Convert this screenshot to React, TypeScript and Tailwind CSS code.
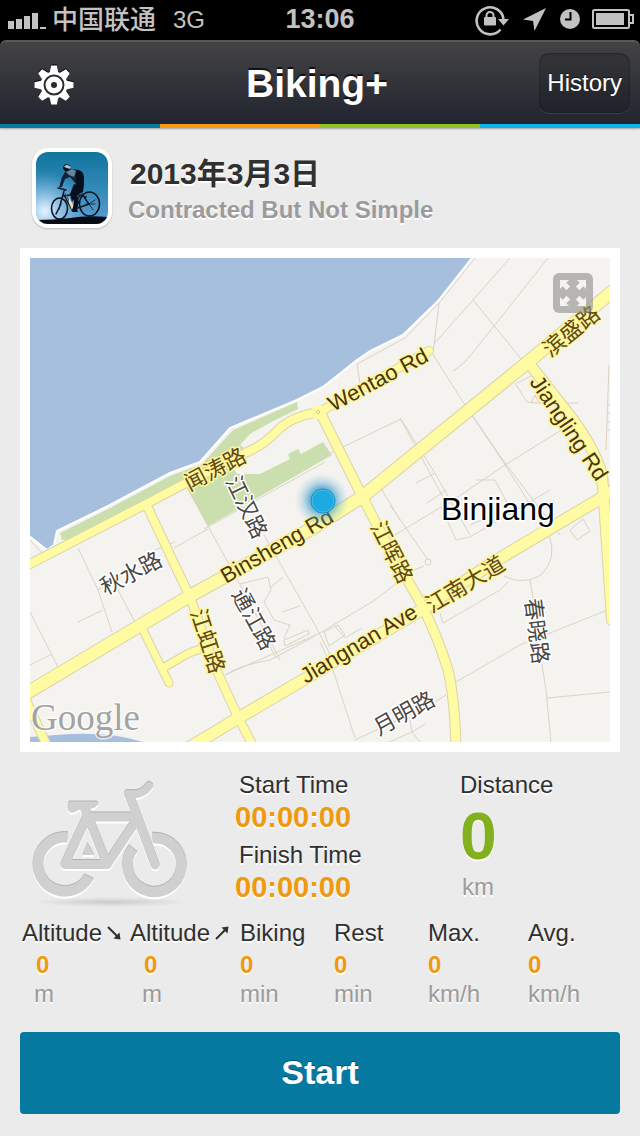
import React from "react";

const ROADS: { d: string; w: number }[] = [
  { d: "M143 630L169 683", w: 8 },
  { d: "M163 668L187 654Q200 648 209 648", w: 8 },
  { d: "M26 700L48 748", w: 9 },
  { d: "M146 504L190 597L215 667L238 717L254 748", w: 9 },
  { d: "M320 412L360 492L383 537L420 602Q437 634 448 670Q455 700 456 750", w: 10 },
  { d: "M528 362L567 412Q594 446 602 475L604 500L612 620", w: 11 },
  { d: "M24 567L146 504L180 486L247 452Q262 446 275 433Q290 416 320 412L330 406L429 351", w: 9 },
  { d: "M20 697L188 597L313 528L362 497L528 362L620 285", w: 13 },
  { d: "M180 753L240 717L303 680L423 609L497 560L603 497L620 486", w: 12 },
];

const LANES = [
  "M475 258L439 303L405 338L357 364L361 390",
  "M439 303L434 346L432 353L465 405L504 463L550 536",
  "M434 344L473 300L510 258M473 300L522 360M453 371L465 362L494 326L548 258",
  "M472 415L505 463L560 535M563 429L505 465L446 505M320 458L401 419L436 475L470 535",
  "M400 418L450 510M416 483L435 473M427 503L446 490",
  "M609 365L606 450M607 405H611M607 413H611M607 422H611M607 430H611",
  "M515 383L527 402L537 403L578 403M517 383L535 374M531 403L535 395L539 403",
  "M390 505L428 560M382 490L400 520M424 566L412 571L375 600L320 633L225 675",
  "M395 535L441 507L456 540L470 537L550 490M470 525L500 512M476 480L495 480L511 510",
  "M549 535Q558 558 541 575Q530 582 515 580L504 576M530 580L537 620L542 665L546 690L551 742",
  "M547 698L610 692M456 682L520 645L610 609M355 740L430 705L446 695M355 738L333 670L320 642",
  "M440 613L443 623L500 590L508 582M324 632L338 625L345 635L329 646ZM335 626L345 638L362 628",
  "M570 530L583 519L590 531L577 540Z",
  "M187 487L208 526L250 603L280 660M204 529L325 462M174 548L208 529",
  "M264 535L315 625L334 662M225 675Q240 665 270 660L315 636M276 658L265 637",
  "M78 548L98 590L112 632M98 590L128 570M103 610L78 622M118 590L135 622",
  "M30 612L58 667M30 665L52 654M30 540L42 553M155 550L175 542",
  "M240 584L268 577L271 590L264 602L274 620L290 625L284 638M270 588L283 577M282 612L300 606M284 640L308 630L309 634L285 646Z",
  "M385 744L412 732L420 742M410 720L412 732L425 724",
];

const CJK_LABELS: { t: string; x: number; y: number; a: number; road: boolean }[] = [
  { t: "闻涛路", x: 215, y: 469, a: -28, road: true },
  { t: "滨盛路", x: 571, y: 331, a: -39, road: true },
  { t: "江汉路", x: 247, y: 507, a: 64, road: false },
  { t: "江晖路", x: 392, y: 552, a: 63, road: true },
  { t: "江虹路", x: 208, y: 641, a: 72, road: true },
  { t: "通江路", x: 254, y: 619, a: 61, road: false },
  { t: "春晓路", x: 537, y: 631, a: 83, road: false },
  { t: "秋水路", x: 131, y: 573, a: -28, road: false },
  { t: "江南大道", x: 465, y: 584, a: -31, road: true },
  { t: "月明路", x: 404, y: 713, a: -29, road: false },
];

const LATIN_LABELS = [
  { t: "Wentao Rd", x: 333, y: 412, a: -28 },
  { t: "Binsheng Rd", x: 226, y: 584, a: -30 },
  { t: "Jiangnan Ave", x: 306, y: 684, a: -31 },
  { t: "Jiangling Rd", x: 529, y: 382, a: 56 },
];

const SANS = "'Liberation Sans', 'Noto Sans CJK SC', sans-serif";
const CJK = "'Noto Sans CJK SC', sans-serif";

function CityMap() {
  return (
    <svg viewBox="30 258 580 484" className="block w-full" role="img" aria-label="Map of Binjiang">
      <defs>
        <radialGradient id="glow">
          <stop offset="0.4" stopColor="#2b93c4" stopOpacity="0.75" />
          <stop offset="0.7" stopColor="#4fa6d0" stopOpacity="0.3" />
          <stop offset="1" stopColor="#7fc0e0" stopOpacity="0" />
        </radialGradient>
      </defs>
      <rect x="30" y="258" width="580" height="484" fill="#f4f3f0" />
      <path
        d="M20 250H480L472 258L438 301L403 335L370 351L357 360L323 387L297 400L230 428L200 462L170 473L110 505L57 531L54 545L47 550L20 529Z"
        fill="#a5bfdd"
        stroke="#fff"
        strokeWidth="2"
      />
      <path d="M30 737L70 734Q115 732 146 743H30Z" fill="#a5bfdd" />
      <g fill="#cbdfae">
        <path d="M60 533L62 540L80 538L147 503L247 450L240 445L250 434L273 421L298 409L297 402L233 430L202 464L170 476L110 508Z" />
        <path d="M186 487L230 462L237 474H260L290 459L288 454L298 449L301 454L323 442L332 455L208 526Z" />
      </g>
      <g fill="none" stroke="#dbd2c4" strokeWidth="1">
        {LANES.map((d) => (
          <path key={d} d={d} />
        ))}
        <circle cx="428" cy="562" r="3" fill="#f4f3f0" />
      </g>
      <g fill="none" strokeLinecap="round" strokeLinejoin="round">
        {ROADS.map((r) => (
          <path key={r.d} d={r.d} stroke="#dcd3a6" strokeWidth={r.w + 1} />
        ))}
        {ROADS.map((r) => (
          <path key={r.d} d={r.d} stroke="#fffba3" strokeWidth={r.w - 1} />
        ))}
      </g>
      <circle cx="318" cy="412" r="7" fill="#fffba3" />
      <path d="M318 410L320 412L318 414L316 412Z" fill="none" stroke="#cfc48c" />
      <g strokeWidth="3" strokeLinejoin="round" fontSize="22" className="[paint-order:stroke]">
        {LATIN_LABELS.map((l) => (
          <text
            key={l.t}
            x={l.x}
            y={l.y}
            transform={`rotate(${l.a} ${l.x} ${l.y})`}
            fontFamily={SANS}
            fill="#4a3310"
            stroke="#fff796"
          >
            {l.t}
          </text>
        ))}
        {CJK_LABELS.map((l) => (
          <text
            key={l.t}
            x={l.x}
            y={l.y + 8}
            transform={`rotate(${l.a} ${l.x} ${l.y})`}
            textAnchor="middle"
            fontFamily={CJK}
            fill={l.road ? "#5e481a" : "#4c4643"}
            stroke={l.road ? "#fff796" : "#fff"}
          >
            {l.t}
          </text>
        ))}
      </g>
      <circle cx="322" cy="500" r="27" fill="url(#glow)" />
      <circle cx="323" cy="501" r="12" fill="#1fa9e1" stroke="#1a8fc4" />
      <circle cx="323" cy="501" r="11" fill="none" stroke="#4dbbe8" />
      <text x="441" y="520" fontSize="32" fontFamily={SANS} fill="#000" stroke="#fff" strokeWidth="3" className="[paint-order:stroke]">
        Binjiang
      </text>
      <text
        x="31"
        y="730"
        fontSize="37"
        fontFamily="'Liberation Serif', serif"
        fill="#a3a3a3"
        stroke="#fff"
        strokeOpacity="0.7"
        strokeWidth="3"
        className="[paint-order:stroke]"
      >
        Google
      </text>
    </svg>
  );
}

function StatusIcons() {
  return (
    <svg viewBox="474 3 162 34" className="h-[34px] w-[162px]" fill="#c2c2c2" aria-hidden="true">
      <path d="M500.500 29.500A13.500 13.500 0 1 1 503.500 19" fill="none" stroke="#c2c2c2" strokeWidth="2.600" />
      <path d="M498 19H509L503.500 25.500Z" />
      <rect x="484" y="17" width="12" height="8.500" rx="1" />
      <path d="M486.500 18V15.500a3.500 3.500 0 0 1 7 0V18" fill="none" stroke="#c2c2c2" strokeWidth="2" />
      <path d="M546 8L534.500 31L533 21L523 19.500Z" />
      <circle cx="570" cy="19" r="10" />
      <path d="M570.500 12V19.500H565" fill="none" stroke="#000" strokeWidth="2" />
      <rect x="593" y="10" width="36" height="18" rx="1.500" fill="none" stroke="#c2c2c2" strokeWidth="2" />
      <rect x="596" y="13" width="28" height="12" />
      <path d="M630 15H633V23H630" fill="none" stroke="#c2c2c2" strokeWidth="2" />
    </svg>
  );
}

function Gear() {
  return (
    <svg viewBox="-20 -20 40 40" className="h-10 w-10 drop-shadow-[0_-1px_0_#000]" fill="#fff" aria-hidden="true">
      {[0, 45, 90, 135, 180, 225, 270, 315].map((a) => (
        <path key={a} d="M-4.500 -12L-2.800 -19.500H2.800L4.500 -12Z" transform={`rotate(${a})`} />
      ))}
      <circle r="13.500" />
      <circle r="9.500" fill="none" stroke="#2b2c30" strokeWidth="2" />
      <circle r="3" fill="#2b2c30" />
    </svg>
  );
}

function RiderPicture() {
  return (
    <svg viewBox="0 0 72 72" className="h-[72px] w-[72px] rounded-[12px]" role="img" aria-label="Biking+">
      <defs>
        <linearGradient id="sky" x1="0" y1="0" x2="0" y2="1">
          <stop offset="0" stopColor="#10759c" />
          <stop offset="0.5" stopColor="#3289b8" />
          <stop offset="1" stopColor="#5c9fd4" />
        </linearGradient>
        <radialGradient id="sun" cx="0.12" cy="0.82" r="0.55">
          <stop offset="0" stopColor="#e6f4ff" />
          <stop offset="1" stopColor="#8cc4ee" stopOpacity="0" />
        </radialGradient>
      </defs>
      <rect width="72" height="72" fill="url(#sky)" />
      <rect width="72" height="72" fill="url(#sun)" />
      <path d="M0 68Q18 68 34 66Q50 63 72 65V72H0Z" fill="#060b14" />
      <g fill="none" stroke="#0b101b" strokeWidth="1.500">
        <ellipse cx="23.500" cy="56.500" rx="8" ry="10.500" />
        <ellipse cx="53.500" cy="52" rx="10" ry="12" />
      </g>
      <g fill="none" stroke="#111827" strokeLinecap="round" strokeWidth="1.500">
        <path d="M23 57L28 39M28 44L39 42L50 45M28 43L36 58L44 43M36 58L53 52L46 42M22 36L30 38M25 52L20 62" />
        <path d="M53 52L49 47M53 52L59 48M53 52L57 58M50 52H59" strokeWidth="0.800" />
      </g>
      <path d="M29 41L37 56" stroke="#8d3c35" strokeWidth="1" />
      <path d="M33 46L38 54L36 58L33 51Z" fill="#eadfb3" />
      <path d="M27 17Q27 12 31 12Q35 13 35 16L34 20H30Z" fill="#0c1422" />
      <path d="M28 15Q30 11 35 15L34 17Z" fill="#a9c8df" />
      <path d="M29 20L36 17L43 18L43 28L40 32L34 25L29 27L26 35L23 36L26 25Z" fill="#142138" />
      <path d="M30 20L36 17L40 19L38 25L33 23Z" fill="#6783a1" />
      <path d="M40 18Q47 17 48 25L48 33L47 40L41 43L43 50L41 57L42 60H36L38 50L36 42L40 33Z" fill="#080f1d" />
      <path d="M38 32L46 34L40 43L36 50L34 42Z" fill="#080f1d" />
    </svg>
  );
}

function BikeShape({ color }: { color: string }) {
  return (
    <g fill="none" stroke={color} strokeLinejoin="round">
      <path d="M67.500 837.500A27 27 0 1 0 89 876.500" strokeWidth="10.500" />
      <path d="M133 848.500A27 27 0 1 0 152.500 838" strokeWidth="10.500" />
      <g strokeWidth="9" strokeLinecap="round">
        <path d="M86 812L107 864.500H65L88 815" />
        <path d="M92 817H130" />
        <path d="M107 864.500L134 824" />
        <path d="M129 795L155 865" />
      </g>
      <path d="M128 794Q142 796 149 786" strokeWidth="8" strokeLinecap="round" />
      <path d="M69 802H96Q100 803 95 807L88 809L91 814L83 813L80 809L74 812Q66 814 69 802Z" fill={color} strokeWidth="1" />
      <path d="M87.500 843L82.500 855H94Z" fill={color} strokeWidth="0" />
    </g>
  );
}

function Bike() {
  return (
    <svg viewBox="30 776 164 132" className="h-[132px] w-[164px]" role="img" aria-label="Bicycle">
      <defs>
        <radialGradient id="ground">
          <stop offset="0" stopColor="#000" stopOpacity="0.14" />
          <stop offset="1" stopColor="#000" stopOpacity="0" />
        </radialGradient>
      </defs>
      <ellipse cx="111" cy="902" rx="78" ry="5" fill="url(#ground)" />
      <g transform="translate(0 2)">
        <BikeShape color="#ffffff" />
      </g>
      <g transform="translate(0 -1)">
        <BikeShape color="#b2b2b2" />
      </g>
      <BikeShape color="#d0d0d0" />
    </svg>
  );
}

function ArrowMark({ up }: { up: boolean }) {
  return (
    <svg viewBox="0 0 16 16" className="h-4 w-4" aria-hidden="true">
      <g transform={up ? undefined : "matrix(1 0 0 -1 0 16)"}>
        <path d="M2 14L11 5" stroke="#303030" strokeWidth="2" />
        <path d="M14.500 1.500L13.500 8.500L7.500 2.500Z" fill="#303030" />
      </g>
    </svg>
  );
}

const STATS: { label: string; unit: string; arrow?: "up" | "down" }[] = [
  { label: "Altitude", unit: "m", arrow: "down" },
  { label: "Altitude", unit: "m", arrow: "up" },
  { label: "Biking", unit: "min" },
  { label: "Rest", unit: "min" },
  { label: "Max.", unit: "km/h" },
  { label: "Avg.", unit: "km/h" },
];

function TimeItem({ label }: { label: string }) {
  return (
    <div>
      <dt className="pl-1 leading-8 text-[#303030]">{label}</dt>
      <dd className="text-[29px] font-bold leading-8 text-[#ee990f]">00:00:00</dd>
    </div>
  );
}

export default function App() {
  return (
    <div className="min-h-screen bg-[#ebebeb] font-['Liberation_Sans','Noto_Sans_CJK_SC',sans-serif] text-2xl">
      <div className="bg-black">
        <div className="grid h-10 grid-cols-[1fr_auto_1fr] items-center px-1 text-[#c2c2c2]">
          <div className="flex items-center pl-1">
            <svg viewBox="0 0 38 16" className="mt-0.5 h-4 w-[38px]" fill="#c2c2c2" aria-hidden="true">
              <path d="M0 8h6v8H0zM8 6h6v10H8zM16 3h6v13h-6zM24 0h6v16h-6zM32 14h6v2h-6z" />
            </svg>
            <span className="ml-1.5 text-[26px] font-medium leading-10">中国联通</span>
            <span className="ml-[17px]">3G</span>
          </div>
          <div className="text-[27px] font-bold">13:06</div>
          <div className="flex justify-end">
            <StatusIcons />
          </div>
        </div>
        <header className="grid h-[84px] grid-cols-[1fr_auto_1fr] items-center rounded-t-md border-t-2 border-[#58585a] bg-linear-to-b from-[#434343] to-[#222530] pl-1 pr-2.5 text-white">
          <button type="button" aria-label="Settings" className="ml-[30px] w-fit pt-1">
            <Gear />
          </button>
          <h1 className="text-[39px] font-bold leading-none [text-shadow:0_-2px_0_#111]">Biking+</h1>
          <button
            type="button"
            className="h-[60px] justify-self-end rounded-[10px] bg-black/15 px-2 shadow-[inset_0_1px_2px_rgba(0,0,0,0.3),inset_0_0_2px_rgba(0,0,0,0.2),0_1px_0_rgba(255,255,255,0.1)] [text-shadow:0_-1px_0_#111]"
          >
            History
          </button>
        </header>
      </div>
      <div className="grid h-1 grid-cols-4 shadow-[0_1px_2px_rgba(0,0,0,0.3)]">
        <div className="bg-[#0a7a9e]" />
        <div className="bg-[#f59a0c]" />
        <div className="bg-[#8fc31f]" />
        <div className="bg-[#0db4ea]" />
      </div>

      <main className="px-5 pb-[22px] pt-5 [text-shadow:0_2px_0_#fff]">
        <section className="flex gap-4 pl-3">
          <div className="rounded-2xl bg-white p-1 shadow-[0_1px_2px_rgba(0,0,0,0.2)]">
            <RiderPicture />
          </div>
          <div className="pt-2 font-bold">
            <h2 className="pl-0.5 text-[30px] leading-9 text-[#303030]">2013年3月3日</h2>
            <p className="leading-9 text-[#9b9b9b]">Contracted But Not Simple</p>
          </div>
        </section>

        <section className="relative mt-5 bg-white p-2.5 [text-shadow:none]">
          <CityMap />
          <button
            type="button"
            aria-label="Full screen"
            className="absolute right-[27px] top-[25px] rounded-md bg-[#8c8c8c]/60"
          >
            <svg viewBox="-20 -20 40 40" className="h-10 w-10" fill="#f4f3f0" aria-hidden="true">
              {[0, 90, 180, 270].map((a) => (
                <path key={a} d="M13 -13V-4L10.300 -6.700L6.500 -2.800L2.800 -6.500L6.700 -10.300L4 -13Z" transform={`rotate(${a})`} />
              ))}
            </svg>
          </button>
        </section>

        <section className="grid grid-cols-[215fr_225fr_160fr] pt-[17px]">
          <div className="pl-2.5 pt-[7px]">
            <Bike />
          </div>
          <dl className="flex flex-col gap-1.5">
            <TimeItem label="Start Time" />
            <TimeItem label="Finish Time" />
          </dl>
          <dl>
            <dt className="leading-8 text-[#303030]">Distance</dt>
            <dd className="text-[66px] font-bold leading-[70px] text-[#82b01e]">0</dd>
            <dd className="pl-0.5 leading-8 text-[#9b9b9b]">km</dd>
          </dl>
        </section>

        <dl className="mt-2 grid grid-cols-[108fr_110fr_94fr_94fr_100fr_92fr] pl-0.5">
          {STATS.map((s, i) => (
            <div key={i}>
              <dt className="flex items-center whitespace-nowrap leading-[34px] text-[#303030]">
                {s.label}
                {s.arrow && (
                  <span className="pl-1">
                    <ArrowMark up={s.arrow === "up"} />
                  </span>
                )}
              </dt>
              <dd className={s.arrow ? "pl-3.5 font-bold leading-[30px] text-[#ee990f]" : "font-bold leading-[30px] text-[#ee990f]"}>
                0
              </dd>
              <dd className={s.arrow ? "pl-3 leading-7 text-[#9b9b9b]" : "leading-7 text-[#9b9b9b]"}>{s.unit}</dd>
            </div>
          ))}
        </dl>

        <button
          type="button"
          className="mt-6 h-[82px] w-full rounded bg-[#05799f] text-[34px] font-bold text-white [text-shadow:0_-1px_0_#04506a]"
        >
          Start
        </button>
      </main>
    </div>
  );
}
